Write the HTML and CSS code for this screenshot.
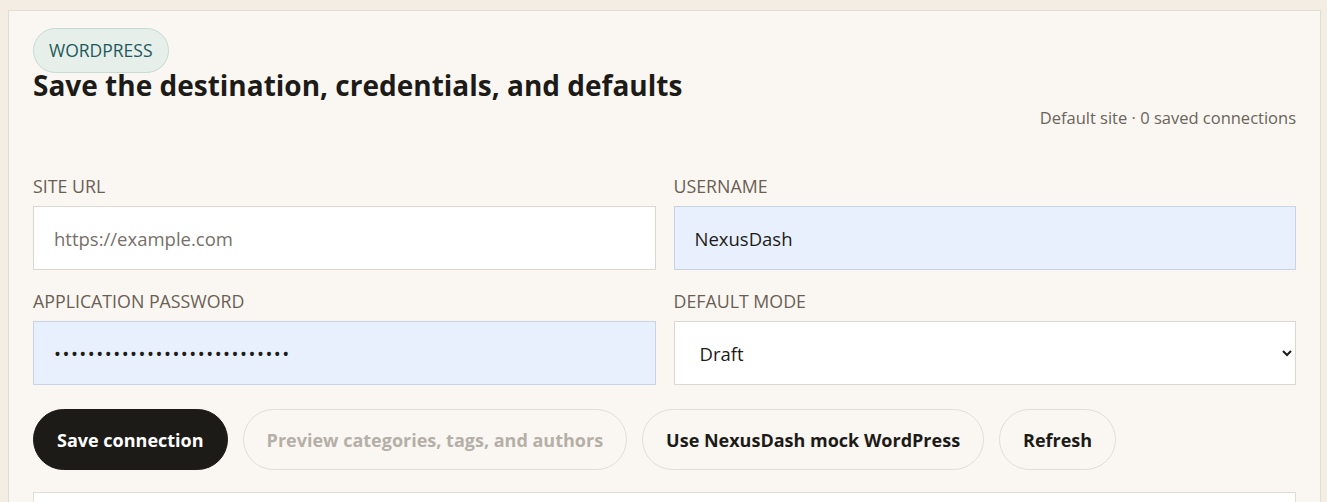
FILE: index.html
```html
<!DOCTYPE html>
<html lang="en">
<head>
<meta charset="utf-8">
<title>WordPress connection</title>
<link rel="stylesheet" href="styles.css">
</head>
<body>
<section class="card">
  <span class="pill">WORDPRESS</span>
  <h2 class="title">Save the destination, credentials, and defaults</h2>
  <p class="meta">Default site · 0 saved connections</p>
  <div class="grid">
    <label class="field">
      <span class="label">SITE URL</span>
      <input class="input" type="text" placeholder="https://example.com">
    </label>
    <label class="field">
      <span class="label">USERNAME</span>
      <input class="input filled" type="text" value="NexusDash">
    </label>
    <label class="field">
      <span class="label">APPLICATION PASSWORD</span>
      <input class="input filled password" type="password" value="abcdefghijklmnopqrstuvwxyzab">
    </label>
    <label class="field">
      <span class="label">DEFAULT MODE</span>
      <select class="input select">
        <option>Draft</option>
        <option>Publish</option>
      </select>
    </label>
  </div>
  <div class="actions">
    <button class="btn primary">Save connection</button>
    <button class="btn" disabled>Preview categories, tags, and authors</button>
    <button class="btn">Use NexusDash mock WordPress</button>
    <button class="btn">Refresh</button>
  </div>
  <div class="panel"></div>
</section>
</body>
</html>
```
FILE: styles.css
```css
* { box-sizing: border-box; }
html, body { margin: 0; padding: 0; }
body {
  background: #f3ede3;
  font-family: "Open Sans", "Noto Sans", sans-serif;
  color: #1d1b18;
  padding: 10px 6px 0 8px;
  overflow: hidden;
  height: 502px;
}
.card {
  background: #faf7f2;
  border: 1px solid #e2ddd4;
  border-bottom: none;
  padding: 17px 24px 0 24px;
  height: 600px;
}
.pill {
  display: inline-block;
  padding: 9px 15px;
  border: 1px solid #c5dbd5;
  background: #e7efea;
  color: #1e5a5c;
  border-radius: 999px;
  font-size: 17.5px;
  line-height: 25px;
}
.title {
  margin: -3px 0 0 0;
  font-size: 28px;
  line-height: 30px;
  font-weight: 700;
  color: #1d1b18;
}
.meta {
  margin: 7px 0 0 0;
  text-align: right;
  font-size: 16.5px;
  line-height: 22px;
  color: #6b645c;
}
.grid {
  margin-top: 47px;
  display: grid;
  grid-template-columns: 1fr 1fr;
  column-gap: 18px;
  row-gap: 21px;
}
.field { display: flex; flex-direction: column; }
.label {
  font-size: 17.8px;
  line-height: 20px;
  color: #6b5f55;
  margin-bottom: 10px;
}
.input {
  height: 64px;
  border: 1px solid #dcd8d1;
  background: #ffffff;
  font-family: inherit;
  font-size: 18.5px;
  color: #1d1b18;
  padding: 0 20px;
  border-radius: 0;
  outline: none;
}
.input::placeholder { color: #77706a; }
.input.filled {
  background: #e8f0fe;
  border-color: #c9d3e3;
}
.input.password { letter-spacing: 1.5px; }
.select {
  padding: 0 20px 0 21px;
}
.actions {
  margin-top: 24px;
  display: flex;
  gap: 15px;
}
.btn {
  height: 61px;
  padding: 0 23px;
  border-radius: 999px;
  border: 1px solid #e3ddd5;
  background: #faf7f2;
  font-family: inherit;
  font-size: 18px;
  font-weight: 700;
  color: #1d1b18;
}
.btn:disabled { color: #b5afa8; }
.btn.primary {
  background: #1d1b18;
  border-color: #1d1b18;
  color: #ffffff;
}
.panel {
  margin-top: 22px;
  height: 80px;
  background: #ffffff;
  border: 1px solid #e2ddd4;
}
```
